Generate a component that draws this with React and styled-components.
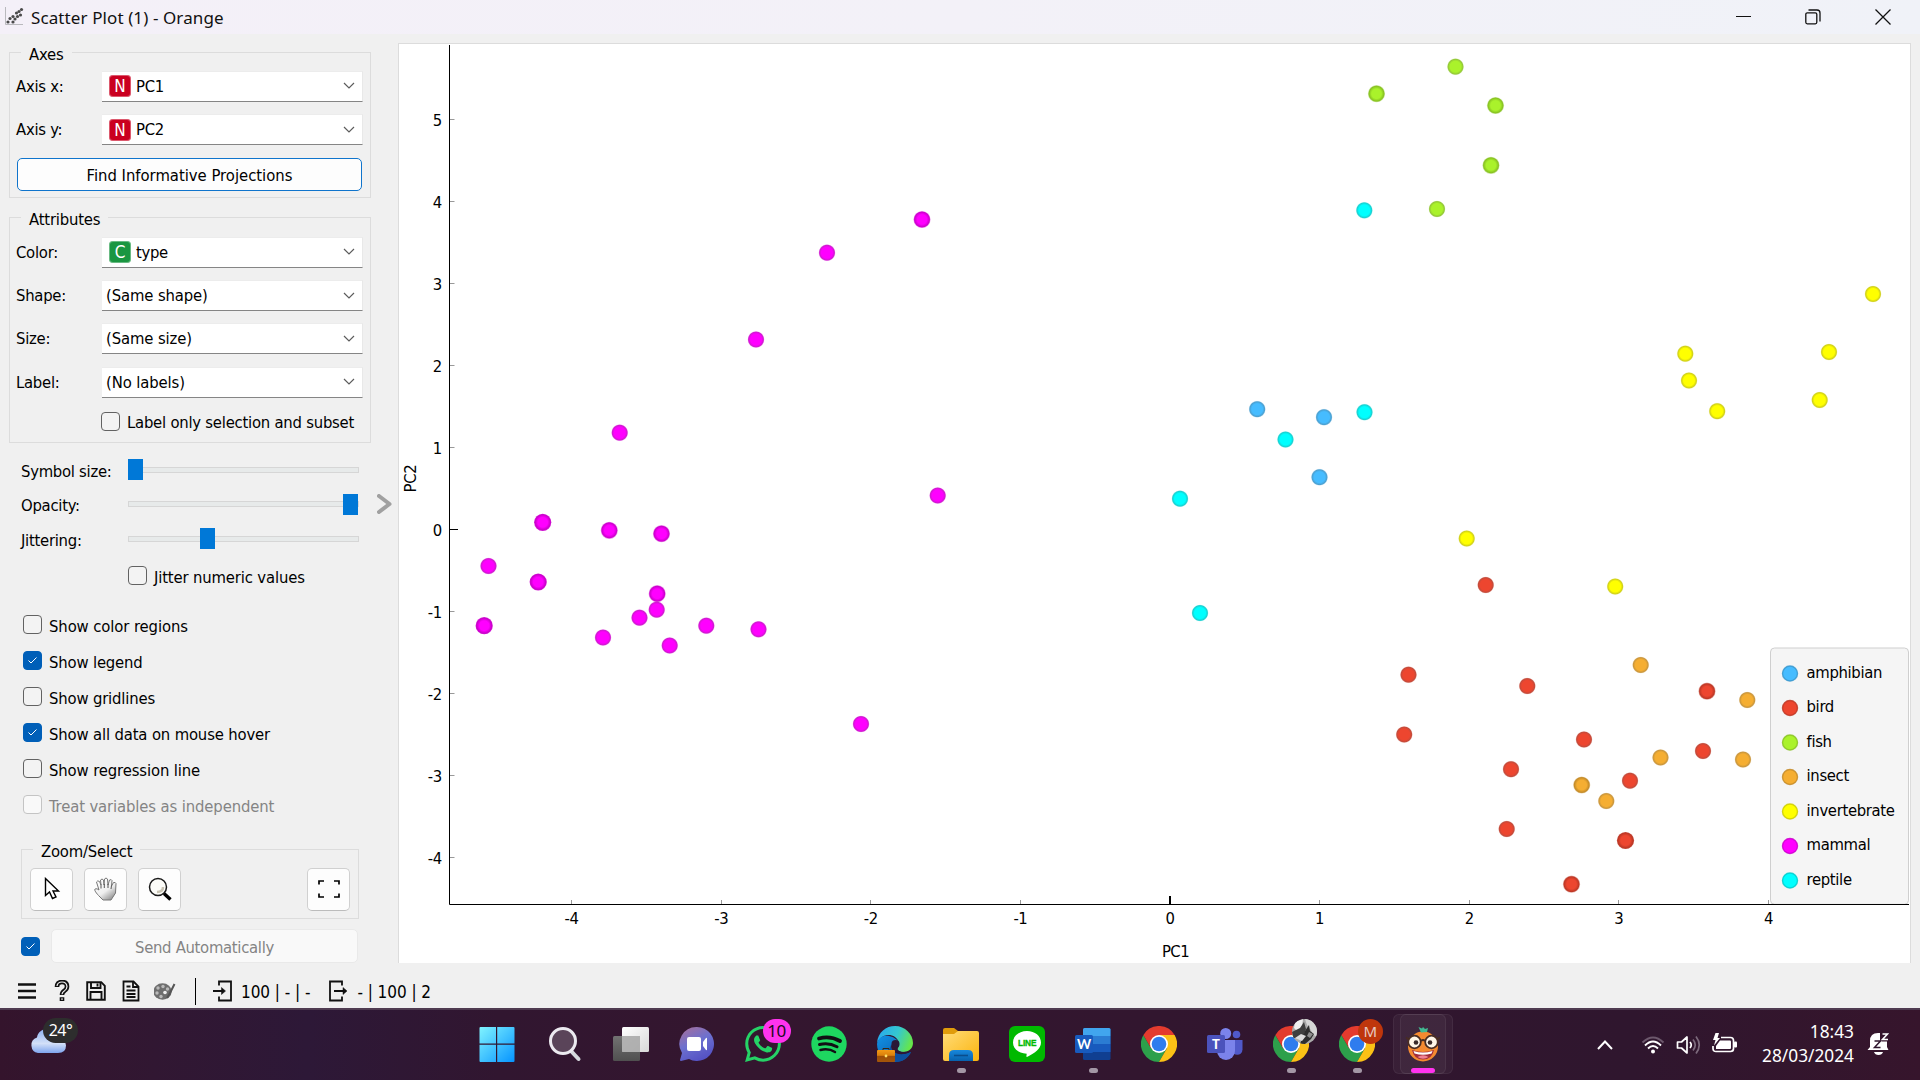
import React from 'react';
import styled, { createGlobalStyle } from 'styled-components';

const Global = createGlobalStyle`
  * { box-sizing: border-box; }
  body { margin: 0; background: #f0f0f0; overflow: hidden; }
`;

const UI = '"DejaVu Sans Condensed", "DejaVu Sans", sans-serif';
const SYS = '"Noto Sans", "Open Sans", sans-serif';

const Screen = styled.div`
  width: 1920px; height: 1080px; display: flex; flex-direction: column;
  background: #f0f0f0; color: #000; overflow: hidden;
  font-family: ${UI}; font-size: 16.5px; line-height: 20px; white-space: nowrap;
`;

const TitleBar = styled.header`
  flex: none; height: 34px; display: flex; align-items: center; padding-left: 4px;
  background: linear-gradient(90deg, #f4f0f8, #f3f1f8 50%, #f0f2f8);
`;
const WindowTitle = styled.h1`
  flex: 1; margin: 0 0 0 7px; padding-top: 1px; font: 400 17px/24px ${SYS}; letter-spacing: 0.1px; color: #111;
`;
const WindowButtons = styled.div`
  display: flex; align-items: center; gap: 54px; padding-right: 29px;
`;

const Main = styled.main`flex: none; height: 929px; display: flex;`;
const Sidebar = styled.aside`
  flex: none; width: 371px; padding: 9px 0 0 9px; display: flex; flex-direction: column;
`;

const Group = styled.fieldset`
  flex: none; margin: ${p => p.$m || '0'}; padding: ${p => p.$p || '0 8px'}; height: ${p => p.$h}px;
  min-width: 0; border: 1px solid #dcdcdc; display: block;
`;
const Legend = styled.legend`
  height: 19px; line-height: 23px; padding: 0 8px; margin-left: ${p => p.$ml || 4}px;
  letter-spacing: -0.2px;
`;
const Field = styled.div`
  display: grid; grid-template-columns: 85px 261px; align-items: center;
  height: 32px; margin-bottom: ${p => p.$mb ?? 11.6}px;
`;
const Label = styled.label`
  letter-spacing: ${p => p.$ls || -0.25}px; padding-top: 1px; margin-left: -1px; color: ${p => (p.$off ? '#848484' : '#000')};
`;
const Combo = styled.div`
  height: 31px; display: flex; align-items: center; padding: 0 7px 0 ${p => (p.$icon ? 7 : 4)}px;
  background: #fff; border-top: 1px solid #ececec; border-right: 1px solid #e8e8e8; border-bottom: 1px solid #858585;
  gap: 5px; letter-spacing: ${p => (p.$icon ? -0.3 : -0.12)}px;
`;
const Value = styled.span`flex: 1; padding-top: 1px;`;
const VarIcon = styled.span`
  width: 22px; height: 22px; border-radius: 4px; background: ${p => p.$c};
  box-shadow: inset 0 0 0 1px rgba(255,255,255,.35);
  color: #fff; font: 17px/23px ${UI}; text-align: center; letter-spacing: 0;
`;
const ProjectionButton = styled.button`
  display: block; width: 345px; height: 33px; padding: 3px 0 0; background: #fdfdfd; color: #000;
  border: 1px solid #0f74cc; border-radius: 5px; font: 16.5px/20px ${UI}; letter-spacing: -0.01px;
`;

const CheckRow = styled.div`
  display: flex; align-items: center; gap: 8px; height: ${p => p.$h || 36}px; padding-left: ${p => p.$pl || 14}px;
`;
const Box = styled.span`
  flex: none; width: 19px; height: 19px; border-radius: 4px; display: grid; place-items: center;
  background: ${p => (p.$on ? '#005fb8' : p.$off ? '#f9f9f9' : '#f3f3f3')};
  border: 1px solid ${p => (p.$on ? '#005fb8' : p.$off ? '#c4c4c4' : '#626262')};
`;
const CheckLabel = styled(Label)`padding-top: 4px;`;
const DisplayOptions = styled.div`margin-top: 13px; height: 216px;`;

const Sliders = styled.div`padding: 11px 0 0 12px;`;
const SliderRow = styled.div`
  display: grid; grid-template-columns: 107px 231px; align-items: center; height: 34.5px;
`;
const SliderLabel = styled(Label)`margin-left: 0; padding-top: 1px;`;
const Track = styled.div`
  height: 6px; background: #e7eaea; border: 1px solid #d6d6d6; display: flex; align-items: center;
  padding-left: ${p => p.$at}px; margin-top: -3px;
`;
const Handle = styled.span`width: 15px; height: 21px; background: #0078d7; flex: none; margin-left: -1px;`;

const ToolRow = styled.div`display: flex; gap: 11px;`;
const ToolButton = styled.button`
  width: 43px; height: 43px; padding: 0; display: grid; place-items: center; background: #fdfdfd;
  border: 1px solid #d0d0d0; border-bottom-color: #bcbcbc; border-radius: 5px;
  margin-left: ${p => (p.$end ? 'auto' : 0)};
`;
const SendRow = styled.div`display: flex; align-items: center; gap: 11px; padding: 10.5px 0 0 12px;`;
const SendButton = styled.button`
  width: 307px; height: 34px; padding: 4px 0 0; background: #f9f9f9; border: 1px solid #e9e9e9; border-radius: 5px;
  color: #848484; font: 16.5px/20px ${UI}; letter-spacing: -0.3px;
`;
const Collapse = styled.div`flex: none; width: 27px; padding: 460px 0 0 6px;`;

const Plot = styled.section`
  flex: none; width: 1513px; height: 920px; margin-top: 9px; background: #fff;
  border: 1px solid #dcdcdc; border-bottom: 0;
  svg { display: block; }
`;

const StatusBar = styled.footer`
  flex: none; height: 45px; display: flex; align-items: center; padding-left: 18px; padding-top: 11px;
  svg { display: block; flex: none; }
`;
const StatusIcons = styled.div`display: flex; align-items: center; gap: 14px;`;
const Divider = styled.span`width: 1px; height: 27px; background: #000; margin: 0 17px;`;
const Counts = styled.span`margin: 1px ${p => p.$mr || 0}px 0 9px; letter-spacing: -0.05px; font-size: 17px;`;

const TaskBar = styled.nav`
  flex: none; height: 72px; display: flex; align-items: stretch; color: #fff; font-family: ${SYS};
  border-top: 2px solid #4f3b51;
  background: linear-gradient(90deg, #34142c, #311732 8%, #2d1837 16%, #311630 26%, #34162f 38%, #32162f 60%, #2f162e 85%, #36152c);
`;
const Weather = styled.div`width: 465.5px; padding: 8px 0 0 29px; display: flex;`;
const Temp = styled.span`
  width: 35px; height: 25px; border-radius: 13px; background: #2d2d2d; font-size: 16px; line-height: 24px;
  text-align: center; margin-left: -23px; letter-spacing: -0.6px; z-index: 1;
`;
const Apps = styled.div`display: flex; width: 1118.5px;`;
const TaskItem = styled.div`
  position: relative; width: 66px; height: 70px; flex: none; display: flex; justify-content: center; padding-top: 16px;
  padding-right: ${p => p.$nudge || 0}px;
  svg { display: block; }
`;
const Indicator = styled.i`
  position: absolute; bottom: 7px; left: ${p => (p.$active ? 21 : 29)}px; width: ${p => (p.$active ? 24 : 9)}px; height: 5px;
  border-radius: 3px; background: ${p => (p.$active ? '#ff33ee' : '#a397a5')};
`;
const Badge = styled.span`
  position: absolute; top: 9px; left: ${p => p.$x}px; min-width: ${p => p.$w}px; height: ${p => p.$h || 24}px; border-radius: 13px;
  background: ${p => p.$bg}; color: ${p => p.$fg}; font-size: ${p => p.$fs}px; line-height: ${p => p.$h || 24}px; text-align: center;
  overflow: hidden; letter-spacing: -0.5px;
`;
const Highlight = styled.span`
  position: absolute; top: 4px; left: ${p => p.$x}px; width: 53px; height: 60px; border-radius: 6px;
  background: rgba(255,255,255,.04); border: 1px solid rgba(255,255,255,.06);
`;
const Tray = styled.div`
  flex: 1; display: flex; align-items: center; padding: 0 0 0 13px;
  svg { display: block; flex: none; }
`;
const TrayIcon = styled.span`margin-left: ${p => p.$ml}px;`;
const Clock = styled.div`
  width: 116px; text-align: right; font-size: 17.3px; line-height: 24px; margin-right: 13px; padding-bottom: 2px;
`;

const COLORS = {
  amphibian: '#46bcff', bird: '#ed462f', fish: '#aaf22b', insect: '#f5ae32',
  invertebrate: '#ffff00', mammal: '#ff00ff', reptile: '#00ffff',
};
const EDGES = {
  amphibian: '#3896cc', bird: '#be3826', fish: '#88c222', insect: '#c48b28',
  invertebrate: '#cccc00', mammal: '#cc00cc', reptile: '#00cccc',
};

/* x, y, number of coinciding instances */
const POINTS = {
  mammal: [[542.7, 522.3, 3], [609.3, 530.3, 2], [661.5, 533.7, 2], [488.5, 566, 1], [538.2, 582, 3], [484.2, 625.7, 3], [603, 637.5, 1],
    [657.2, 593.7, 2], [656.7, 609.7, 1], [639.5, 617.7, 1], [669.7, 645.5, 1], [706.3, 625.7, 1], [758.5, 629.3, 1],
    [922, 219.5, 2], [827, 252.7, 1], [756, 339.5, 1], [619.7, 432.7, 1], [937.7, 495.5, 1], [861, 724, 1]],
  fish: [[1376.5, 93.7, 2], [1455.5, 66.7, 1], [1495.5, 105.5, 2], [1491, 165.3, 2], [1437, 209, 1]],
  reptile: [[1364.3, 210.3, 1], [1364.5, 412.2, 1], [1285.5, 439.5, 1], [1180, 498.7, 1], [1200, 613, 1]],
  amphibian: [[1257.2, 409.2, 1], [1324, 417.2, 1], [1319.5, 477.2, 1]],
  invertebrate: [[1873, 294, 1], [1685.3, 353.7, 1], [1829, 352, 1], [1689, 380.5, 1], [1717.2, 411.2, 1], [1819.7, 400, 1], [1466.7, 538.5, 1], [1615.2, 586.5, 1]],
  bird: [[1485.7, 585, 1], [1408.5, 674.7, 1], [1527.3, 686, 1], [1404.2, 734.5, 1], [1511, 769.2, 1], [1584, 739.5, 1], [1506.7, 829, 1],
    [1630, 780.7, 1], [1625.5, 840.5, 3], [1571.5, 884.2, 2], [1707, 691.2, 2], [1703, 751, 1]],
  insect: [[1640.7, 665, 1], [1747.3, 700, 1], [1743, 759.5, 1], [1660.5, 757.5, 1], [1581.7, 785, 2], [1606.3, 801, 1]],
};
const RIM = { 1: 0.05, 2: 0.35, 3: 0.9 };

const Tick = ({ x1, y1, x2, y2, strong }) => (
  <line x1={x1} y1={y1} x2={x2} y2={y2} stroke={strong ? '#000' : '#999'} strokeWidth={strong || 1} />
);

function ScatterPlot() {
  const xs = [-4, -3, -2, -1, 0, 1, 2, 3, 4];
  const ys = [5, 4, 3, 2, 1, 0, -1, -2, -3, -4];
  const px = v => 1170 + v * 149.6;
  const py = v => 529.5 - v * 82;
  return (
    <svg width="1511" height="919" viewBox="399 44 1511 919" fontFamily={UI} fontSize="16.5">
      <defs>
        {Object.keys(COLORS).map(k => [1, 2, 3].map(n => (
          <radialGradient key={k + n} id={`pt-${k}-${n}`}>
            <stop offset={n > 1 ? 0.56 : 0.64} stopColor={COLORS[k]} />
            <stop offset=".86" stopColor={EDGES[k]} stopOpacity={n > 1 ? 1 : 0.9} />
            <stop offset="1" stopColor={EDGES[k]} stopOpacity={RIM[n]} />
          </radialGradient>
        )))}
      </defs>
      {xs.map(v => (
        <g key={v}>
          <Tick x1={v ? Math.floor(px(v)) + 0.5 : 1170} x2={v ? Math.floor(px(v)) + 0.5 : 1170} y1={v ? 900 : 896} y2={904} strong={v ? 0 : 2} />
          <text x={px(v)} y="924" textAnchor="middle" letterSpacing="-0.4">{v}</text>
        </g>
      ))}
      {ys.map(v => (
        <g key={v}>
          <Tick x1={450} x2={v ? 454.5 : 458} y1={Math.floor(py(v)) + 0.5} y2={Math.floor(py(v)) + 0.5} strong={v ? 0 : 1} />
          <text x="442" y={py(v) + 6.7} textAnchor="end" letterSpacing="-0.3">{v}</text>
        </g>
      ))}
      <path d="M449.5 45V904.5H1909" fill="none" stroke="#000" />
      <text x="1175.5" y="957.2" textAnchor="middle" letterSpacing="-0.6">PC1</text>
      <text transform="translate(416 478.500) rotate(-90)" textAnchor="middle" letterSpacing="-0.2">PC2</text>
      {Object.entries(POINTS).map(([k, list]) => list.map(([x, y, n], i) => (
        <circle key={k + i} cx={x} cy={y} r="8.6" fill={`url(#pt-${k}-${n})`} />
      )))}
      <rect x="1770.5" y="648" width="138" height="256.3" rx="4" fill="#f5f5f5" stroke="#cfcfcf" />
      <path d="M1768.5 904.5H1909" stroke="#000" />
      {Object.keys(COLORS).map((k, i) => (
        <g key={k}>
          <circle cx="1790" cy={673.5 + i * 34.5} r="7.5" fill={COLORS[k]} stroke={EDGES[k]} strokeOpacity=".85" strokeWidth="1.4" />
          <text x="1806.5" y={678 + i * 34.45} letterSpacing="-0.33">{k}</text>
        </g>
      ))}
    </svg>
  );
}

const Chevron = () => (
  <svg width="12" height="8" viewBox="0 0 12 8"><path d="M1 1l5 5 5-5" fill="none" stroke="#5c5c5c" strokeWidth="1.2" /></svg>
);
const Check = () => (
  <svg width="11" height="9" viewBox="0 0 11 9"><path d="M1.500 4.500L4 7l5.500-5.500" fill="none" stroke="#fff" strokeWidth="1" /></svg>
);

const Select = ({ label, children, letter, color, mb }) => (
  <Field $mb={mb}>
    <Label>{label}</Label>
    <Combo $icon={!!letter}>
      {letter && <VarIcon $c={color}>{letter}</VarIcon>}
      <Value>{children}</Value>
      <Chevron />
    </Combo>
  </Field>
);
const CheckItem = ({ on, off, children, ls, ...rest }) => (
  <CheckRow {...rest}>
    <Box $on={on} $off={off}>{on && <Check />}</Box>
    <CheckLabel $ls={ls} $off={off}>{children}</CheckLabel>
  </CheckRow>
);
const Slider = ({ label, at }) => (
  <SliderRow><SliderLabel $ls={-0.27}>{label}</SliderLabel><Track $at={at}><Handle /></Track></SliderRow>
);

const Chrome = () => (
  <svg width="36" height="36" viewBox="0 0 36 36">
    <path d="M10.200 22.500L2.400 9A18 18 0 0 0 18 36L25.800 22.500z" fill="#2da04b" />
    <path d="M18 9H33.600A18 18 0 0 1 18 36L25.800 22.500z" fill="#fbc116" />
    <path d="M18 9H33.600A18 18 0 0 0 2.400 9L10.200 22.500z" fill="#e33b2e" />
    <circle cx="18" cy="18" r="9" fill="#fff" /><circle cx="18" cy="18" r="7.300" fill="#2f7cee" />
  </svg>
);

const ICONS = {
  windows: (
    <svg width="36" height="36" viewBox="0 0 36 36">
      <defs><linearGradient id="win" gradientUnits="userSpaceOnUse" x1="0" y1="0" x2="36" y2="36"><stop stopColor="#83f6ff" /><stop offset="1" stopColor="#0593ff" /></linearGradient></defs>
      <path fill="url(#win)" d="M1.500 1H17v16.500H.5V2a1 1 0 0 1 1-1zM18.200 1H34.500a1 1 0 0 1 1 1V17.500H18.200zM.5 18.700H17V36H1.500a1 1 0 0 1-1-1zM18.200 18.700H35.500V35a1 1 0 0 1-1 1H18.200z" />
    </svg>
  ),
  search: (
    <svg width="34" height="36" viewBox="0 0 34 36">
      <path d="M23.500 25.500L30.500 33" stroke="#d6d9de" strokeWidth="4" strokeLinecap="round" />
      <circle cx="15" cy="15" r="12.500" fill="#5a4459" stroke="#eceaf0" strokeWidth="3" />
    </svg>
  ),
  tasks: (
    <svg width="36" height="36" viewBox="0 0 36 36">
      <defs>
        <linearGradient id="tv" x2="1" y2="1"><stop stopColor="#fff" /><stop offset="1" stopColor="#d8d8d8" /></linearGradient>
        <linearGradient id="tg" x2="0" y2="1"><stop stopColor="#727272" /><stop offset="1" stopColor="#505050" /></linearGradient>
      </defs>
      <rect x="0" y="10" width="27" height="25" rx="1.500" fill="url(#tg)" />
      <rect x="9" y="1" width="27" height="25" rx="1.500" fill="url(#tv)" />
      <path d="M9 10h18v16H9z" fill="#a6a6a6" opacity=".85" />
    </svg>
  ),
  chat: (
    <svg width="36" height="36" viewBox="0 0 36 36">
      <defs><linearGradient id="ch" x1=".1" x2=".6" y2="1"><stop stopColor="#a66f9c" /><stop offset=".5" stopColor="#6c70cf" /><stop offset="1" stopColor="#5451c4" /></linearGradient></defs>
      <path d="M18 1a17 17 0 1 1-8 32L2 35q-1 0-1-1l2-7A17 17 0 0 1 18 1z" fill="url(#ch)" />
      <rect x="8" y="11" width="14" height="14" rx="2" fill="#fff" />
      <path d="M24 16l3-4q1-.5 1 .5v11q0 1-1 .5l-3-4z" fill="#fff" />
    </svg>
  ),
  whatsapp: (
    <svg width="36" height="36" viewBox="0 0 24 24">
      <path fill="#25d366" d="M17.472 14.382c-.297-.149-1.758-.867-2.030-.967-.273-.099-.471-.148-.670.150-.197.297-.767.966-.940 1.164-.173.199-.347.223-.644.075-.297-.150-1.255-.463-2.390-1.475-.883-.788-1.480-1.761-1.653-2.059-.173-.297-.018-.458.130-.606.134-.133.298-.347.446-.520.149-.174.198-.298.298-.497.099-.198.050-.371-.025-.520-.075-.149-.669-1.612-.916-2.207-.242-.579-.487-.500-.669-.510-.173-.008-.371-.010-.570-.010-.198 0-.520.074-.792.372-.272.297-1.040 1.016-1.040 2.479 0 1.462 1.065 2.875 1.213 3.074.149.198 2.096 3.200 5.077 4.487.709.306 1.262.489 1.694.625.712.227 1.360.195 1.871.118.571-.085 1.758-.719 2.006-1.413.248-.694.248-1.289.173-1.413-.074-.124-.272-.198-.570-.347m-5.421 7.403h-.004a9.870 9.870 0 0 1-5.031-1.378l-.361-.214-3.741.982.998-3.648-.235-.374a9.860 9.860 0 0 1-1.510-5.260c.001-5.450 4.436-9.884 9.888-9.884 2.640 0 5.122 1.030 6.988 2.898a9.825 9.825 0 0 1 2.893 6.994c-.003 5.450-4.437 9.884-9.885 9.884m8.413-18.297A11.815 11.815 0 0 0 12.050 0C5.495 0 .160 5.335.157 11.892c0 2.096.547 4.142 1.588 5.945L.057 24l6.305-1.654a11.882 11.882 0 0 0 5.683 1.448h.005c6.554 0 11.890-5.335 11.893-11.893a11.821 11.821 0 0 0-3.480-8.413z" />
    </svg>
  ),
  spotify: (
    <svg width="36" height="36" viewBox="0 0 36 36">
      <circle cx="18" cy="18" r="17.700" fill="#1ed760" />
      <g fill="none" stroke="#120f14" strokeLinecap="round">
        <path d="M8 12.500q11-3 21 2.500" strokeWidth="3.800" /><path d="M8.500 18.500q9-2.500 17.500 2.200" strokeWidth="3" /><path d="M9.500 24q8-2 14.500 2" strokeWidth="2.500" />
      </g>
    </svg>
  ),
  edge: (
    <svg width="36" height="36" viewBox="0 0 36 36">
      <defs>
        <linearGradient id="e1" x1="0" x2="1" y1=".2" y2=".5"><stop stopColor="#28a8ee" /><stop offset=".55" stopColor="#35c8cf" /><stop offset="1" stopColor="#66e64a" /></linearGradient>
        <linearGradient id="e2" x1="0" x2="1" y2="1"><stop stopColor="#1192e6" /><stop offset="1" stopColor="#0b4f9c" /></linearGradient>
        <linearGradient id="e3" x2="0" y2="1"><stop stopColor="#f39a15" /><stop offset=".45" stopColor="#d97f0c" /><stop offset=".5" stopColor="#9c4d06" /><stop offset="1" stopColor="#a4560a" /></linearGradient>
      </defs>
      <path d="M0 17C1 6 9 0 18 0c10 0 18 8 18 17 0 6-5 9-10 9-4 0-6-2-5-4 2-4 1-8-3-11C12 7 4 9 0 17z" fill="url(#e1)" />
      <path d="M0 18C1 11 7 9 12 10c5 1 9 4 9 6-5-1-9 4-6 9 4 5 12 5 19 1-3 6-8 10-16 10C8 36 0 28 0 18z" fill="url(#e2)" />
      <path d="M14 19c0 8 8 12 20 7-2 5-7 9-14 10-6-3-9-10-6-17z" fill="#0c4f9e" />
      <circle cx="18.500" cy="18" r="4" fill="#2a1838" />
      <path d="M18 22q6 6 15 3l-3 2q-9 2-13-3z" fill="#2a1838" />
      <rect x="0" y="24" width="18" height="12" rx="1" fill="url(#e3)" />
      <path d="M6 24v-1.500h6V24" fill="none" stroke="#3a2410" />
      <circle cx="9" cy="30" r="1.400" fill="#ffe066" />
    </svg>
  ),
  explorer: (
    <svg width="36" height="36" viewBox="0 0 36 36">
      <defs><linearGradient id="fo" x2="1" y2="1"><stop stopColor="#ffdc78" /><stop offset="1" stopColor="#fbb40e" /></linearGradient><linearGradient id="fb" x2="0" y2="1"><stop stopColor="#1787dc" /><stop offset="1" stopColor="#0862ad" /></linearGradient></defs>
      <path d="M0 4q0-2 2-2h9l4 3v8H0z" fill="#e09c0b" />
      <path d="M0 8h11l4-3h19q2 0 2 2v26q0 2-2 2H2q-2 0-2-2z" fill="url(#fo)" />
      <path d="M6 35v-6q0-5 5-5h14q5 0 5 5v6z" fill="url(#fb)" />
      <path d="M11 29.500h14" stroke="#0a4d8c" strokeWidth="1.600" />
    </svg>
  ),
  line: (
    <svg width="36" height="36" viewBox="0 0 36 36">
      <rect width="36" height="36" rx="6" fill="#00b900" />
      <path d="M18 5c8 0 14 5 14 11.500 0 6-6 10.500-13.500 14.300-1 .4-1.300-.3-1-1.300l.2-1.800C10 27.500 4 23 4 16.500 4 10 10 5 18 5z" fill="#fff" />
      <text x="18.200" y="19.800" textAnchor="middle" fill="#00b900" fontFamily="Liberation Sans, sans-serif" fontWeight="700" fontSize="8.300" letterSpacing="-.1" stroke="#00b900" strokeWidth=".3">LINE</text>
    </svg>
  ),
  word: (
    <svg width="36" height="36" viewBox="0 0 36 36">
      <rect x="8" y="2" width="27.500" height="32" rx="1.500" fill="#103f91" />
      <path d="M9.500 2h24.500a1.500 1.500 0 0 1 1.500 1.500V10H8V3.500A1.500 1.500 0 0 1 9.500 2z" fill="#41a5ee" />
      <path d="M8 10h27.500v8H8z" fill="#2b7cd3" /><path d="M8 18h27.500v8H8z" fill="#185abd" />
      <rect x="0" y="9" width="18" height="18" rx="1.500" fill="#185abd" />
      <text x="9" y="23" textAnchor="middle" fill="#fff" fontFamily="Lato, sans-serif" fontWeight="700" fontSize="13.500">W</text>
    </svg>
  ),
  chrome: <Chrome />,
  teams: (
    <svg width="36" height="36" viewBox="0 0 36 36">
      <circle cx="29.500" cy="8.500" r="3.800" fill="#5059c9" /><path d="M25 14h10.500v9.500a5 5 0 0 1-10.500 0z" fill="#5059c9" />
      <circle cx="18.700" cy="7.500" r="5.500" fill="#7b83eb" /><path d="M10 14h18v11a9 9 0 0 1-18 0z" fill="#7b83eb" />
      <rect x="0" y="9" width="18" height="18" rx="1.500" fill="#4b53bc" />
      <text x="9" y="23" textAnchor="middle" fill="#fff" fontFamily="Lato, sans-serif" fontWeight="900" fontSize="13">T</text>
    </svg>
  ),
  orange: (
    <svg width="36" height="36" viewBox="0 0 36 36">
      <circle cx="18" cy="20.500" r="15" fill="#f58220" />
      <path d="M16 6.500L13.500 1l3.500 1.500L18 1l2 2 3-1-1 4z" fill="#33b58a" />
      <circle cx="9.500" cy="16" r="6.300" fill="#fff6e8" stroke="#3b1d12" strokeWidth="1.800" /><circle cx="26.500" cy="16" r="6.300" fill="#fff6e8" stroke="#3b1d12" strokeWidth="1.800" />
      <path d="M1 11.500l3 2M35 11.500l-3 2M16 15q2-2 4 0" stroke="#3b1d12" strokeWidth="1.800" fill="none" />
      <circle cx="11" cy="16.500" r="2.300" fill="#2a1a18" /><circle cx="25" cy="16.500" r="2.300" fill="#2a1a18" />
      <path d="M7 24q11 4 22 0-2 9.500-11 9.500T7 24z" fill="#9b1c2c" /><path d="M8.500 25q9.500 3 19 0l-1 2.500q-8.500 2.500-17 0z" fill="#fff" />
      <path d="M12.500 31q5.500-3.500 11 0-5.500 3.500-11 0z" fill="#f0788c" />
    </svg>
  ),
};

const APPS = [
  { icon: 'windows', nudge: 3 }, { icon: 'search' }, { icon: 'tasks' }, { icon: 'chat' },
  { icon: 'whatsapp', badge: <Badge $x={33} $w={28} $bg="#ff33ee" $fg="#1b0a1a" $fs={17}>10</Badge> },
  { icon: 'spotify' }, { icon: 'edge' }, { icon: 'explorer', open: true }, { icon: 'line' },
  { icon: 'word', open: true }, { icon: 'chrome' }, { icon: 'teams' },
  {
    icon: 'chrome', open: true,
    badge: (
      <Badge $x={34} $w={25} $h={25} $bg="#a9a9a9">
        <svg width="25" height="25" viewBox="0 0 25 25">
          <path d="M13 0h12v18q-5-2-6-7-4-3-6-11z" fill="#d6d6d6" /><path d="M3 3l8-3-1 8-5 4-3-3z" fill="#efefef" />
          <path d="M0 13l8-4 4-6 2 7-2 6-6 3H1z" fill="#3f3f3f" /><path d="M13 12l4-6 1 6 4 3-3 5-6 5H8z" fill="#2e2e2e" />
          <path d="M3 19l6-4 5 2-4 5z" fill="#dcdcdc" /><path d="M17 13l4 2-3 4-3-2z" fill="#8f8f8f" />
        </svg>
      </Badge>
    ),
  },
  { icon: 'chrome', open: true, badge: <Badge $x={34} $w={25} $h={25} $bg="#bf360c" $fg="#e8c9c0" $fs={15}>M</Badge> },
];

export default function App() {
  return (
    <Screen>
      <Global />
      <TitleBar>
        <svg width="20" height="20" viewBox="0 0 20 20">
          <path d="M1.500 0v17.500H19" fill="none" stroke="#b9b9bd" />
          <g fill="#4a4a4a">{[[4, 15], [6, 11.500], [9, 15], [9, 9.500], [11, 12], [12.500, 6], [13.500, 9.500], [15, 4.500], [16.500, 8], [17.500, 2.500]].map(([x, y], i) => <circle key={i} cx={x} cy={y} r="1.600" />)}</g>
        </svg>
        <WindowTitle>Scatter Plot (1) - Orange</WindowTitle>
        <WindowButtons>
          <svg width="15" height="16"><path d="M0 7.500H15" stroke="#111" /></svg>
          <svg width="16" height="16" viewBox="0 0 16 16" fill="none" stroke="#111" strokeWidth="1.300"><rect x=".8" y="3.800" width="11" height="11" rx="1.500" /><path d="M3.500 1H12q3 0 3 3v8.500" /></svg>
          <svg width="16" height="16" viewBox="0 0 16 16"><path d="M.5.5l15 15M15.500.5l-15 15" stroke="#111" strokeWidth="1.300" /></svg>
        </WindowButtons>
      </TitleBar>

      <Main>
        <Sidebar>
          <Group $h={155} $p="8px 7px 0">
            <Legend>Axes</Legend>
            <Select label="Axis x:" letter="N" color="#ca0020">PC1</Select>
            <Select label="Axis y:" letter="N" color="#ca0020" mb={12.4}>PC2</Select>
            <ProjectionButton>Find Informative Projections</ProjectionButton>
          </Group>
          <Group $h={235} $p="9px 7px 0" $m="10px 0 0">
            <Legend>Attributes</Legend>
            <Select label="Color:" letter="C" color="#1a9641">type</Select>
            <Select label="Shape:" mb={11.4}>(Same shape)</Select>
            <Select label="Size:" mb={11.4}>(Same size)</Select>
            <Select label="Label:" mb={5}>(No labels)</Select>
            <CheckItem $pl={84} ls={-0.23}>Label only selection and subset</CheckItem>
          </Group>
          <Sliders>
            <Slider label="Symbol size:" at={0} />
            <Slider label="Opacity:" at={215} />
            <Slider label="Jittering:" at={72} />
          </Sliders>
          <CheckItem $pl={119} $h={36} ls={-0.15}>Jitter numeric values</CheckItem>
          <DisplayOptions>
            <CheckItem ls={-0.1}>Show color regions</CheckItem>
            <CheckItem on ls={-0.17}>Show legend</CheckItem>
            <CheckItem ls={-0.17}>Show gridlines</CheckItem>
            <CheckItem on ls={-0.15}>Show all data on mouse hover</CheckItem>
            <CheckItem ls={-0.12}>Show regression line</CheckItem>
            <CheckItem off ls={-0.12}>Treat variables as independent</CheckItem>
          </DisplayOptions>
          <Group $h={79} $m="17px 12px 0 12px" $p="9px 8px 0">
            <Legend $ml={3}>Zoom/Select</Legend>
            <ToolRow>
              <ToolButton>
                <svg width="18" height="24" viewBox="0 0 18 24"><path d="M2.500 1.500v17l4-3.500 3 6.500 3.500-1.500-3-6h5.500z" fill="#fff" stroke="#000" strokeWidth="1.400" /></svg>
              </ToolButton>
              <ToolButton>
                <svg width="24" height="24" viewBox="0 0 24 24">
                  <defs><linearGradient id="hand" x1=".3" x2="1" y2="1"><stop stopColor="#fff" /><stop offset=".5" stopColor="#eee" /><stop offset="1" stopColor="#777" /></linearGradient></defs>
                  <path d="M6 20C2 16 0 13 1 12q2-1 4 1L2.500 5q1-2 3-.5L7 8 6.500 3q1.500-2 3 0L10 8l.5-6q1.500-2 3 0l.5 6 1.500-5q2-1 2.500.5L17.500 9l2-3.500q2-.5 2.500 1L21.500 16 17 23H9z" fill="url(#hand)" stroke="#777" strokeWidth="1" />
                  <path d="M7 7.500v4M10.300 7v4M14 7v4M17.500 8.500L17 12" stroke="#555" strokeWidth="1" />
                </svg>
              </ToolButton>
              <ToolButton>
                <svg width="24" height="24" viewBox="0 0 24 24"><circle cx="10" cy="10" r="8.500" fill="#fcfcf8" stroke="#1a1a1a" strokeWidth="1.500" /><path d="M15 10q0 5-6 5" stroke="#c9c4b4" strokeWidth="2.500" fill="none" /><path d="M16 16.500l6.500 6" stroke="#000" strokeWidth="3.400" /></svg>
              </ToolButton>
              <ToolButton $end>
                <svg width="22" height="18" viewBox="0 0 22 18"><path d="M1 4.500V1h5M16 1h5v3.500M21 13.500V17h-5M6 17H1v-3.500" fill="none" stroke="#000" strokeWidth="1.700" /></svg>
              </ToolButton>
            </ToolRow>
          </Group>
          <SendRow>
            <Box $on><Check /></Box>
            <SendButton>Send Automatically</SendButton>
          </SendRow>
        </Sidebar>
        <Collapse>
          <svg width="15" height="20" viewBox="0 0 15 20"><path d="M2 2l10.500 8L2 18" fill="none" stroke="#a0a0a0" strokeWidth="4" strokeLinecap="round" strokeLinejoin="round" /></svg>
        </Collapse>
        <Plot><ScatterPlot /></Plot>
      </Main>

      <StatusBar>
        <StatusIcons>
          <svg width="18" height="22" viewBox="0 0 18 22"><path d="M0 4.500h18M0 11h18M0 17.500h18" stroke="#111" strokeWidth="2.600" strokeLinecap="round" /></svg>
          <svg width="22" height="22" viewBox="-1 0 22 22" fill="none"><path d="M6 7q0-5 5-5t5 4.500q0 2.500-2.500 4.200Q11 12.300 11 15M11 17.300v3.600" stroke="#111" strokeWidth="4.600" /><path d="M6 6q.5-4 5-4t5 4.500q0 2.500-2.500 4.200Q11 12.300 11 14.200M11 18.300v1.800" stroke="#f0f0f0" strokeWidth="1.200" /></svg>
          <svg width="20" height="22" viewBox="0 0 20 22" fill="none" stroke="#111" strokeWidth="1.900"><path d="M1.200 2.200h14l3.600 3.600v14H1.200z" /><path d="M5 2v6h9.500V2M4.500 20v-8h11v8" /><path d="M11.500 3.500v3" /></svg>
          <svg width="20" height="22" viewBox="-2 0 20 22" fill="none" stroke="#111" strokeWidth="1.800"><path d="M1.500 1.500h10l5 5v14h-15z" /><path d="M11 1.500v5.500h5.500M4.500 6.500h4M4.500 10.500h9M4.500 14h9M4.500 17h9" /></svg>
          <svg width="24" height="22" viewBox="1 0 24 22"><ellipse cx="9.500" cy="11.500" rx="9.200" ry="8.200" fill="#6e6e6e" /><g fill="#b9b9b9"><circle cx="5" cy="8" r="1.700" /><circle cx="10" cy="6.500" r="1.700" /><circle cx="4" cy="13" r="1.700" /><circle cx="8" cy="16.500" r="1.700" /><circle cx="14.500" cy="9" r="1.700" /></g><circle cx="12" cy="12.500" r="1.800" fill="#efefef" /><path d="M14 18l3-5M16 15l5.500-11" stroke="#555" strokeWidth="2" /></svg>
        </StatusIcons>
        <Divider />
        <svg width="19" height="22" viewBox="0 0 19 22" fill="none" stroke="#111" strokeWidth="1.800"><path d="M6 5.500V1.500h12v19H6v-4M0 11h11" /><path d="M8.500 7.500L12.500 11l-4 3.500z" fill="#111" strokeWidth=".5" /></svg>
        <Counts $mr={19}>100 | - | -</Counts>
        <svg width="19" height="22" viewBox="0 0 19 22" fill="none" stroke="#111" strokeWidth="1.800"><path d="M13 5.500V1.500H1v19h12v-4M5 11h11" /><path d="M14 7.500L18 11l-4 3.500z" fill="#111" strokeWidth=".5" /></svg>
        <Counts>- | 100 | 2</Counts>
      </StatusBar>

      <TaskBar>
        <Weather>
          <svg width="37" height="38" viewBox="0 0 37 38">
            <defs><linearGradient id="cl" x2="0" y2="1"><stop stopColor="#8fb4f2" /><stop offset=".6" stopColor="#d3e0f8" /><stop offset="1" stopColor="#7ea5ee" /></linearGradient></defs>
            <path d="M9 35a8 8 0 0 1-1-15.500C9 13.500 14 10.500 19 11.500c5 0 8 3 9 8q9 1 9 8 0 7.500-8 7.500z" fill="url(#cl)" />
          </svg>
          <Temp>24°</Temp>
        </Weather>
        <Apps>
          {APPS.map((a, i) => (
            <TaskItem key={i} $nudge={a.nudge}>{ICONS[a.icon]}{a.badge}{a.open && <Indicator />}</TaskItem>
          ))}
          <TaskItem>
            <Highlight $x={10} /><Highlight $x={3} />
            {ICONS.orange}
            <Indicator $active />
          </TaskItem>
        </Apps>
        <Tray>
          <svg width="16" height="12" viewBox="0 0 16 12"><path d="M1 10l7-7.500L15 10" fill="none" stroke="#fff" strokeWidth="2" /></svg>
          <TrayIcon $ml={28}>
            <svg width="24" height="20" viewBox="0 0 24 20" fill="none" strokeWidth="1.900">
              <path d="M1.500 7.500Q12-2.500 22.500 7.500" stroke="#6c586c" /><path d="M4 10.500Q12 2.500 20 10.500M7 13.500Q12 8.500 17 13.500" stroke="#fff" /><circle cx="12" cy="16.500" r="2" fill="#fff" />
            </svg>
          </TrayIcon>
          <TrayIcon $ml={11}>
            <svg width="25" height="20" viewBox="0 0 25 20" fill="none" strokeWidth="1.700">
              <path d="M1.500 7h4L11 2v16l-5.500-5h-4zM14 7q2.500 3 0 6" stroke="#fff" strokeLinejoin="round" /><path d="M17 4.500q4.500 5.500 0 11M20 1.500q6.500 8.500 0 17" stroke="#7c6a7c" />
            </svg>
          </TrayIcon>
          <TrayIcon $ml={11}>
            <svg width="26" height="24" viewBox="0 0 26 24">
              <path d="M9 4.500h9.500q3 0 3 3v8q0 3-3 3H4q-3 0-3-3V13" fill="none" stroke="#fff" strokeWidth="1.700" /><path d="M8 7.500h10q1 0 1 1v6.500q0 1-1 1H4v-3z" fill="#fff" /><rect x="22" y="8.500" width="3" height="6" rx="1" fill="#fff" /><path d="M3.500 0L1 7h2.500L2 12.500 8 5H5.500L7 0z" fill="#fff" />
            </svg>
          </TrayIcon>
          <Clock>18:43<br />28/03/2024</Clock>
          <svg width="22" height="26" viewBox="0 0 22 26">
            <path d="M3 15V9q0-8 8-8h2v8l7-1v7l1.500 3H.5z" fill="#fff" /><path d="M7 20h9q-1 3-4.500 3T7 20z" fill="#fff" />
            <path d="M14.500 0H22v9.500h-7.500z" fill="#34152d" />
            <path d="M7.500 9h6l-6 6.500h6" fill="none" stroke="#2f162e" strokeWidth="1.500" /><path d="M15.500 2h5l-5 5.500h5.500" fill="none" stroke="#fff" strokeWidth="1.600" />
          </svg>
        </Tray>
      </TaskBar>
    </Screen>
  );
}
